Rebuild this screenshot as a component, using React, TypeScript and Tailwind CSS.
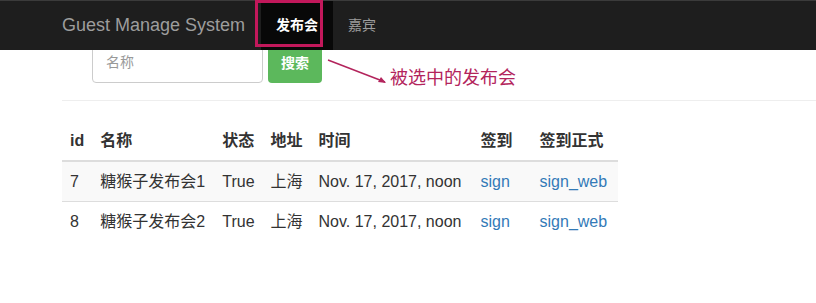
import React from "react";

const rows = [
  { id: 7, name: "糖猴子发布会1" },
  { id: 8, name: "糖猴子发布会2" },
];

const font = { fontFamily: '"Liberation Sans", "Noto Sans CJK SC", sans-serif' };

export default function App() {
  return (
    <div
      className="relative w-[816px] h-[303px] overflow-hidden bg-white text-[#333]"
      style={font}
    >
      {/* navbar */}
      <div className="relative z-10 flex h-[50px] items-center bg-[#1e1e1e] border-t border-[#3b3b3b]">
        <span className="pl-[62px] pr-[16px] text-[18px] text-[#9d9d9d]">
          Guest Manage System
        </span>
        <ul className="flex h-full">
          <li className="flex h-full items-center bg-[#080808] px-[15px] text-[14px] font-bold text-white">
            发布会
          </li>
          <li className="flex h-full items-center px-[15px] text-[14px] text-[#9d9d9d]">
            嘉宾
          </li>
        </ul>
      </div>

      {/* search form */}
      <div className="-mt-[4px] flex gap-[5px] pl-[92px]">
        <div className="flex h-[37px] w-[171px] items-end rounded-[4px] border border-[#ccc] pb-[9px] pl-[13px] text-[14px] text-[#999]">
          名称
        </div>
        <button className="flex h-[37px] w-[54px] items-end justify-center rounded-[4px] bg-[#5cb85c] pb-[9px] text-[14px] font-bold text-white">
          搜索
        </button>
      </div>

      <div className="ml-[62px] mt-[17px] border-t border-[#eee]" />

      {/* table */}
      <table className="ml-[62px] mt-[20px] border-collapse text-[16px] leading-[23px]">
        <thead>
          <tr className="border-b-2 border-[#ddd] text-left font-bold">
            <th className="w-[30px] px-[8px] py-[8px]">id</th>
            <th className="w-[122px] px-[8px] py-[8px]">名称</th>
            <th className="w-[48px] px-[8px] py-[8px]">状态</th>
            <th className="w-[48px] px-[8px] py-[8px]">地址</th>
            <th className="w-[162px] px-[8px] py-[8px]">时间</th>
            <th className="w-[59px] px-[8px] py-[8px]">签到</th>
            <th className="w-[86px] px-[8px] py-[8px]">签到正式</th>
          </tr>
        </thead>
        <tbody>
          {rows.map((r, i) => (
            <tr
              key={r.id}
              className={`border-t border-[#ddd] ${i === 0 ? "bg-[#f9f9f9]" : ""}`}
            >
              <td className="px-[8px] py-[8px]">{r.id}</td>
              <td className="px-[8px] py-[8px] whitespace-nowrap">{r.name}</td>
              <td className="px-[8px] py-[8px]">True</td>
              <td className="px-[8px] py-[8px]">上海</td>
              <td className="px-[8px] py-[8px] whitespace-nowrap">Nov. 17, 2017, noon</td>
              <td className="px-[8px] py-[8px] text-[#337ab7]">sign</td>
              <td className="px-[8px] py-[8px] text-[#337ab7]">sign_web</td>
            </tr>
          ))}
        </tbody>
      </table>

      {/* annotation */}
      <div className="absolute left-[255px] top-0 z-20 h-[47px] w-[68px] border-[3px] border-[#c2185b]" />
      <svg className="absolute left-0 top-0 z-20" width="816" height="303">
        <line x1="328" y1="60" x2="385" y2="82" stroke="#b3245c" strokeWidth="1.5" />
        <polygon points="386,83 378,82 381,77" fill="#b3245c" />
      </svg>
      <span className="absolute left-[390px] top-[66px] text-[18px] leading-[24px] text-[#b3245c]">
        被选中的发布会
      </span>
    </div>
  );
}
